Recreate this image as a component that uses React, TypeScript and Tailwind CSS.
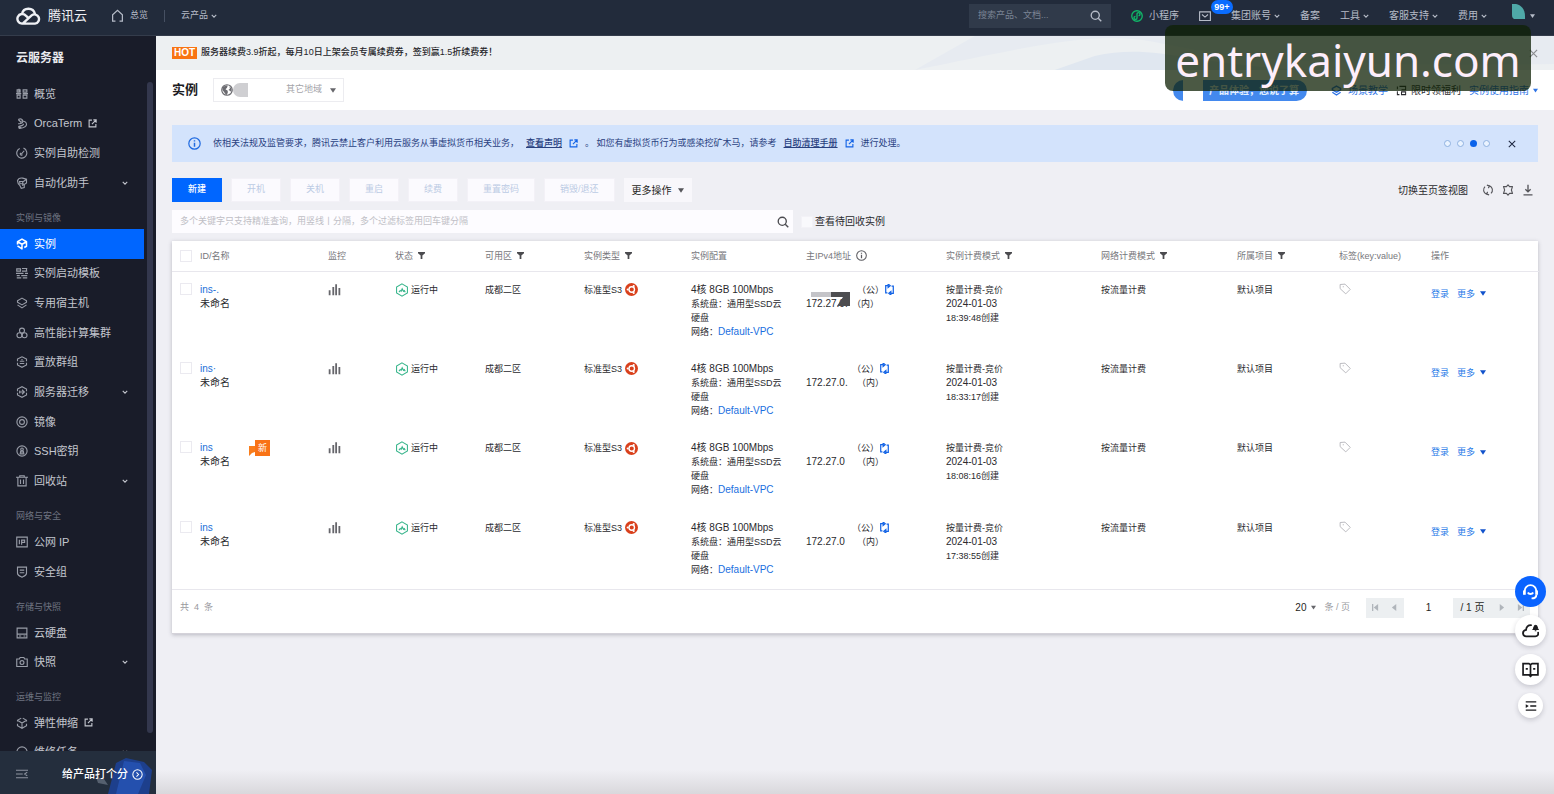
import type { ReactNode } from 'react';

type IconProps = { className?: string; children: ReactNode; box?: string; stroke?: number };

function Svg({ className = 'size-3', children, box = '0 0 16 16', stroke = 1.5 }: IconProps) {
  return (
    <svg
      viewBox={box}
      className={`shrink-0 ${className}`}
      fill="none"
      stroke="currentColor"
      strokeWidth={stroke}
      aria-hidden="true"
    >
      {children}
    </svg>
  );
}

const Chevron = ({ className = 'size-[6px]' }: { className?: string }) => (
  <Svg className={className} box="0 0 8 8">
    <path d="M1 2.5 4 5.5 7 2.5" />
  </Svg>
);

const Caret = ({ className = 'w-[7px] h-[5px]' }: { className?: string }) => (
  <svg viewBox="0 0 8 6" className={`shrink-0 ${className}`} fill="currentColor" aria-hidden="true">
    <path d="M0 0h8L4 6z" />
  </svg>
);

const External = ({ className = 'size-[9px]' }: { className?: string }) => (
  <Svg className={className} stroke={2}>
    <path d="M7 2H2v12h12V9M9.5 1.5h5v5M14 2 7 9" />
  </Svg>
);

const Magnifier = ({ className = 'size-3' }: { className?: string }) => (
  <Svg className={className} stroke={1.8}>
    <circle cx="7" cy="7" r="5.4" />
    <path d="m11 11 4 4" />
  </Svg>
);

const Close = ({ className = 'size-[9px]' }: { className?: string }) => (
  <Svg className={className} box="0 0 10 10" stroke={1.3}>
    <path d="m1 1 8 8M9 1 1 9" />
  </Svg>
);

const Funnel = () => (
  <svg viewBox="0 0 8 8" className="size-[7px] shrink-0" fill="#4b4b4f" aria-hidden="true">
    <path d="M0 0h8v1.4L5 4v4H3V4L0 1.4z" />
  </svg>
);

const Info = ({ className = 'size-3' }: { className?: string }) => (
  <Svg className={className}>
    <circle cx="8" cy="8" r="7" />
    <path d="M8 7v5M8 4v1.6" strokeWidth="1.8" />
  </Svg>
);

const navIcons: Record<string, ReactNode> = {
  overview: (
    <path d="M1.5 2.5h4v3h-4zM9.5 2.5h5v3h-5zM1.5 9.5h4v4h-4zM9.5 9.5h5v4h-5zM0 7.5h7M9 7.5h7M4 1v5" />
  ),
  orca: (
    <path d="M3 2c4-2 6 0 6 2.500S6 8 3 7.500M3 2l4 4M7 4c4 0 7 1.500 7 4.500S10 13 5 14c-2-1-1.500-3 1-3.500 3-.5 4-1.500 4-3M3 11l4 2" />
  ),
  check: (
    <path d="M5 2a6.700 6.700 0 1 0 8 2M10 1.500a6 6 0 0 1 3.500 3M7 9.500 11 5M6.500 8a1.500 1.500 0 1 0 2 2" />
  ),
  helper: (
    <path d="M2 5c1-3 4-4 7-3.500L14 3v5l-3 2v4l-4 1-2-4-2-2zM4 6h6l4-3M5 9h4l2 1M5 6v3M9 6v6" />
  ),
  instance: (
    <path
      d="M2 8.500V5l6-3.500L14 5v6l-3 1.700M2 5l6 3.300L14 5M2 10.500 8 14.500V8.500"
      strokeWidth="2"
      strokeLinejoin="round"
    />
  ),
  template: (
    <path d="M1 2.500h5v3H1zM8 2h7M8 5.500h7M14 2v4M0 8.500h10M12 8.500h4M1 11.500h4M7 11.500h8M1 14.500h6M9 14.500h6" />
  ),
  host: <path d="M8 1.500 14 5v2L8 10.500 2 7V5zM2 10.500 8 14.500l6-4" strokeLinejoin="round" />,
  cluster: (
    <>
      <circle cx="8" cy="4.800" r="3.300" />
      <circle cx="4.600" cy="11" r="3.300" />
      <circle cx="11.400" cy="11" r="3.300" />
    </>
  ),
  placement: <path d="M8 1 14 4v3M14 9v3l-6 3-6-3V9M2 7V4l6-3M5 7h6M5 10h6M7 5h2" />,
  migrate: <path d="M2 7V4l6-3 6 3v3M14 9v3l-6 3-6-3V9M4 8h8M8 5l3 3-3 3M5 6v4" />,
  image: (
    <>
      <circle cx="8" cy="8" r="6.800" />
      <circle cx="8" cy="8" r="3.200" />
    </>
  ),
  key: (
    <>
      <circle cx="8" cy="8" r="6.800" />
      <circle cx="8" cy="5.700" r="1.700" />
      <path d="M6.500 7.500 5.500 12h5l-1-4.500M8 8v4" />
    </>
  ),
  trash: <path d="M0 3h16M5 2.500V1h6v1.500M2.500 3v11.500h11V3M6 6v6M10 6v6" />,
  ip: <path d="M1 1.500h14v13H1zM4.500 5v6M7.500 11.500V5.500h4v3h-4" />,
  shield: <path d="M2 1.500h12v8c0 3-3 4-6 5.500-3-1.500-6-2.500-6-5.500zM5 5.500h6M5 9h6" />,
  disk: <path d="M1.500 1.500h13v13h-13zM1.500 9.500h13M10 12h2.500M4 12h3" />,
  camera: (
    <>
      <path d="M1 4h3.500l1-2h5l1 2H15v10H1z" />
      <circle cx="8" cy="8.800" r="2.600" />
    </>
  ),
  scaling: <path d="M2 6V4.500l5-3M9 1.500l5 3V6M14 9v2.500L8 15l-6-3.500V9M3 5l5 3 5-3M8 8v6" />,
  repair: (
    <>
      <circle cx="8" cy="8" r="6.800" />
      <path d="M5 8h6" />
    </>
  ),
};

type NavItem = { icon: string; label: string; more?: boolean; external?: boolean; active?: boolean };

function NavList({ items, className }: { items: NavItem[]; className: string }) {
  return (
    <ul className={`grid auto-rows-fr ${className}`}>
      {items.map((item) => (
        <li key={item.label} className="flex pr-3">
          <a
            href="#"
            className={`flex flex-1 items-center pl-4 text-[11px] ${
              item.active ? 'bg-[#0066ff] text-white' : 'text-[#c3c6ce]'
            }`}
          >
            <span className={item.active ? 'text-white' : 'text-[#999da8]'}>
              <Svg>{navIcons[item.icon]}</Svg>
            </span>
            <span className="ml-[6px]">{item.label}</span>
            {item.external && <External className="ml-[6px] size-[9px]" />}
            {item.more && <Chevron className="mr-4 ml-auto size-[6px]" />}
          </a>
        </li>
      ))}
    </ul>
  );
}

const NavHeading = ({ children }: { children: ReactNode }) => (
  <h3 className="flex h-[31px] shrink-0 items-center pt-[10px] pl-4 text-[9px] text-[#6f7481]">{children}</h3>
);

function Sidebar() {
  return (
    <aside className="relative flex w-[156px] shrink-0 flex-col bg-[#191c29]">
      <h2 className="flex h-[43px] shrink-0 items-center pl-4 text-[12px] font-bold text-[#e9eaee]">云服务器</h2>
      <nav className="min-h-0 flex-1 overflow-hidden" aria-label="云服务器">
        <NavList
          className="h-[119px]"
          items={[
            { icon: 'overview', label: '概览' },
            { icon: 'orca', label: 'OrcaTerm', external: true },
            { icon: 'check', label: '实例自助检测' },
            { icon: 'helper', label: '自动化助手', more: true },
          ]}
        />
        <NavHeading>实例与镜像</NavHeading>
        <NavList
          className="h-[267px]"
          items={[
            { icon: 'instance', label: '实例', active: true },
            { icon: 'template', label: '实例启动模板' },
            { icon: 'host', label: '专用宿主机' },
            { icon: 'cluster', label: '高性能计算集群' },
            { icon: 'placement', label: '置放群组' },
            { icon: 'migrate', label: '服务器迁移', more: true },
            { icon: 'image', label: '镜像' },
            { icon: 'key', label: 'SSH密钥' },
            { icon: 'trash', label: '回收站', more: true },
          ]}
        />
        <NavHeading>网络与安全</NavHeading>
        <NavList
          className="h-[60px]"
          items={[
            { icon: 'ip', label: '公网 IP' },
            { icon: 'shield', label: '安全组' },
          ]}
        />
        <NavHeading>存储与快照</NavHeading>
        <NavList
          className="h-[59px]"
          items={[
            { icon: 'disk', label: '云硬盘' },
            { icon: 'camera', label: '快照', more: true },
          ]}
        />
        <NavHeading>运维与监控</NavHeading>
        <NavList
          className="h-[59px]"
          items={[
            { icon: 'scaling', label: '弹性伸缩', external: true },
            { icon: 'repair', label: '维修任务', more: true },
          ]}
        />
      </nav>
      <div className="absolute top-[46px] right-[3px] bottom-[61px] w-[6px] rounded-sm bg-[#33374d]" />
      <div className="relative flex h-[43px] shrink-0 items-center bg-[#242e3d] pt-[3px] pl-4">
        <svg viewBox="0 0 60 43" className="absolute right-0 bottom-0 h-[43px] w-[60px]" aria-hidden="true">
          <path d="M12 43 20 12l10-5 18 4 8 8-3 24z" fill="#1d3f8c" />
          <path d="M20 43 28 10l16 2 6 12-8 19z" fill="#2a5cc4" opacity=".6" />
          <path d="m0 26 8 2 4 6-10-2z" fill="#56606f" />
        </svg>
        <button type="button" aria-label="收起菜单" className="text-[#8d93a0]">
          <Svg>
            <path d="M0 3h16M0 8h9M0 13h16M15 5.500 11.500 8l3.500 2.500" />
          </Svg>
        </button>
        <a href="#" className="relative ml-auto flex items-center gap-1 pr-[13px] text-[11px] font-medium text-white">
          给产品打个分
          <Svg className="size-[11px]">
            <circle cx="8" cy="8" r="6.800" />
            <path d="m6.500 5 3 3-3 3" />
          </Svg>
        </a>
      </div>
    </aside>
  );
}

const TopLink = ({ label, menu }: { label: string; menu?: boolean }) => (
  <a href="#" className="flex items-center gap-[3px]">
    {label}
    {menu && <Chevron />}
  </a>
);

function TopBar() {
  return (
    <header className="flex h-9 shrink-0 items-center border-b border-[#343c4b] bg-[#222b3b] pr-[19px] pb-1 pl-4 text-[10px] text-[#b6bcc8]">
      <a href="#" className="flex items-center gap-[7px] text-[13px] text-[#eef0f4]">
        <Svg box="0 0 25 19" className="h-[19px] w-[25px]" stroke={2.4}>
          <path
            d="M12.500 12 9.800 9.600A4.800 4.800 0 1 0 6 17.600H19A4.600 4.600 0 1 0 15.600 9.400L7.200 17.200M6 8A6.600 6.600 0 0 1 18.900 7.800"
            strokeLinecap="round"
          />
        </Svg>
        腾讯云
      </a>
      <a href="#" className="ml-6 flex items-center gap-[6px] text-[9px]">
        <Svg className="size-[13px]">
          <path d="M5.500 15H2V7l6-5.500L14 7v8h-3.500" />
        </Svg>
        总览
      </a>
      <span className="ml-4 h-3 w-px bg-[#465062]" />
      <div className="ml-4 text-[9px]">
        <TopLink label="云产品" menu />
      </div>
      <div className="ml-auto flex items-center gap-5">
        <label className="flex h-6 w-[142px] items-center bg-[#303a4a] px-[9px]">
          <input
            type="search"
            aria-label="搜索"
            placeholder="搜索产品、文档..."
            className="min-w-0 flex-1 bg-transparent text-[9px] outline-none placeholder:text-[#7b8494]"
          />
          <Magnifier />
        </label>
        <a href="#" className="flex items-center gap-[6px]">
          <Svg className="size-3 text-[#10b668]" stroke={1.800}>
            <circle cx="8" cy="8" r="7" />
            <path d="M10 7.500a2 2 0 1 0-2-2v5a2 2 0 1 1-2-2" />
          </Svg>
          小程序
        </a>
        <a href="#" className="relative" aria-label="消息 99+">
          <Svg>
            <path d="M.8 2.500h14.400v11.500H.8zM4 6l4 3.500L12 6" />
          </Svg>
          <span className="absolute -top-[10px] left-3 h-[14px] w-[22px] rounded-full bg-[#0a6cff] text-center text-[9px] leading-[14px] font-bold text-white">
            99+
          </span>
        </a>
        <TopLink label="集团账号" menu />
        <TopLink label="备案" />
        <TopLink label="工具" menu />
        <TopLink label="客服支持" menu />
        <TopLink label="费用" menu />
        <button type="button" aria-label="账户" className="ml-1 flex items-center gap-1">
          <svg viewBox="0 0 13 15" className="mb-2 h-[15px] w-[15px]" aria-hidden="true">
            <path d="M0 0h4c5 1 9 5 9 12v3H2c-2-1-2-3-2-5z" fill="#4fa9a8" />
          </svg>
          <Caret className="h-[4px] w-[5px]" />
        </button>
      </div>
    </header>
  );
}

function PromoBanner() {
  return (
    <section className="relative flex h-[34px] shrink-0 items-center bg-[#edf0f2] px-4">
      <svg
        viewBox="0 0 700 34"
        preserveAspectRatio="none"
        className="absolute inset-y-0 right-0 h-full w-1/2"
        aria-hidden="true"
      >
        <path d="M60 34C180 10 240-6 300 6s120 26 400 22V0H120z" fill="#e7ebf1" />
        <path d="M240 20c60-14 100 10 220 14H200z" fill="#e0e7f0" />
      </svg>
      <span className="bg-[#f97413] px-[2px] text-[10px] leading-[12px] font-bold text-white">HOT</span>
      <a href="#" className="ml-1 text-[9px] font-medium text-[#26262a]">
        服务器续费3.9折起，每月10日上架会员专属续费券，签到赢1.5折续费券！
      </a>
      <button type="button" aria-label="关闭活动" className="relative ml-auto text-[#8a8c90]">
        <Close />
      </button>
    </section>
  );
}

function TitleBar() {
  return (
    <section className="flex h-10 shrink-0 items-center bg-white px-4 text-[10px]">
      <h1 className="text-[13px] font-bold text-[#1c1c1f]">实例</h1>
      <button
        type="button"
        className="ml-[15px] flex h-6 w-[131px] items-center border border-[#ececf0] px-[7px] text-[#a4a4a9]"
      >
        <svg viewBox="0 0 16 16" className="size-3" aria-hidden="true">
          <circle cx="8" cy="8" r="7" fill="#fff" stroke="#6b6b70" strokeWidth="1.600" />
          <path d="M2 4.500 6 2h3l-1 3-2 2 3 2v3l-2 3-2-3-3-4zM11 3l3 3v5l-2-2-2-1 2-2z" fill="#6b6b70" />
        </svg>
        <span className="h-[14px] w-[15px] rounded-l-full bg-[#cfcfd2]" />
        <span className="ml-auto text-[9px]">其它地域</span>
        <Caret className="ml-2 h-[5px] w-[6px] text-[#66666b]" />
      </button>
      <a
        href="#"
        className="relative ml-auto flex h-[21px] w-[134px] items-center justify-end overflow-hidden rounded-full bg-[#4389ee] pr-2 font-bold text-[#e3efff]"
      >
        <span className="absolute inset-y-0 left-[10px] w-5 bg-white" />
        产品体验，您说了算
      </a>
      <a href="#" className="ml-6 flex items-center gap-[6px] text-[#2f74e6]">
        <Svg className="size-[11px]" stroke={2}>
          <path d="M8 1.500 14 5v2L8 10.500 2 7V5zM2 10.500 8 14.500l6-4" />
        </Svg>
        场景教学
      </a>
      <a href="#" className="ml-2 flex items-center gap-1 text-[#2b2b2f]">
        <Svg className="size-[11px]">
          <path d="M2 2v4M5 2h9v5H8M2 9v5h3M8 10h6v4H8z" />
        </Svg>
        限时领福利
      </a>
      <a href="#" className="ml-2 flex items-center gap-1 text-[#2f74e6]">
        实例使用指南
        <Caret className="h-[5px] w-[5px]" />
      </a>
    </section>
  );
}

function Notice() {
  return (
    <section className="flex h-[37px] items-center bg-[#d3e3fc] px-4 text-[9px] text-[#29417f]">
      <Info className="size-[13px] text-[#1f6ae0]" />
      <p className="ml-3 flex items-center gap-[7px] whitespace-nowrap">
        <span>依相关法规及监管要求，腾讯云禁止客户利用云服务从事虚拟货币相关业务，</span>
        <a href="#" className="font-medium underline">
          查看声明
        </a>
        <External className="size-[9px] text-[#1263e6]" />
        <span>。 如您有虚拟货币行为或感染挖矿木马，请参考</span>
        <a href="#" className="font-medium underline">
          自助清理手册
        </a>
        <External className="size-[9px] text-[#1263e6]" />
        <span>进行处理。</span>
      </p>
      <div className="ml-auto flex items-center gap-[6px]">
        {[0, 1, 2, 3].map((dot) => (
          <button
            key={dot}
            type="button"
            aria-label={`公告 ${dot + 1}`}
            className={
              dot === 2
                ? 'size-[7px] rounded-full bg-[#0a62ea]'
                : 'size-[7px] rounded-full border border-[#8fb2e0] bg-[#eaf3ff]'
            }
          />
        ))}
      </div>
      <button type="button" aria-label="关闭公告" className="mr-[6px] ml-[18px] text-[#1d2740]">
        <Close className="size-2" />
      </button>
    </section>
  );
}

function Toolbar() {
  const disabled = ['开机', '关机', '重启', '续费', '重置密码', '销毁/退还'];
  return (
    <div className="mt-4 flex h-6 items-center gap-[9px] text-[9px]">
      <button type="button" className="h-6 w-[50px] bg-[#0066ff] font-medium text-white">
        新建
      </button>
      {disabled.map((label) => (
        <button
          key={label}
          type="button"
          disabled
          className="h-6 border border-[#f3f1f7] bg-[#fbfafe] px-[15px] text-[#bccbe4]"
        >
          {label}
        </button>
      ))}
      <button type="button" className="flex h-6 items-center gap-[6px] bg-[#f8f7fb] px-2 text-[10px] text-[#1f1f23]">
        更多操作
        <Caret className="h-[5px] w-[6px] text-[#55555a]" />
      </button>
      <div className="mr-1 ml-auto flex items-center gap-2 text-[#55555a]">
        <a href="#" className="mr-[6px] text-[10px] text-[#2b2b2f]">
          切换至页签视图
        </a>
        <button type="button" aria-label="刷新">
          <Svg>
            <path d="M6 13.500A6 6 0 0 1 4 3.500M10 2.500A6 6 0 0 1 12 12.500M6.500 1.500 10 2.500 8.500 5.500M9.500 14.500 6 13.500 7.500 10.500" />
          </Svg>
        </button>
        <button type="button" aria-label="设置">
          <Svg>
            <path d="m8 1 2 2.500h4L12.500 8l1.500 4.500h-4L8 15l-2-2.500H2L3.500 8 2 3.500h4z" strokeLinejoin="round" />
          </Svg>
        </button>
        <button type="button" aria-label="下载">
          <Svg>
            <path d="M8 1v9M4.500 7 8 10.500 11.500 7M2 14.500h12" strokeWidth="1.800" />
          </Svg>
        </button>
      </div>
    </div>
  );
}

function FilterRow() {
  return (
    <div className="mt-2 flex h-[23px] items-center text-[9px]">
      <label className="flex h-[23px] w-5/11 items-center bg-[#fdfcff] pr-1 pl-2">
        <input
          type="text"
          aria-label="筛选实例"
          placeholder="多个关键字只支持精准查询，用竖线丨分隔，多个过滤标签用回车键分隔"
          className="min-w-0 flex-1 bg-transparent outline-none placeholder:text-[#c0bfc6]"
        />
        <Magnifier className="size-3 text-[#4b4b50]" />
      </label>
      <label className="ml-2 flex items-center gap-[2px] text-[#2b2b2f]">
        <input type="checkbox" className="size-3 appearance-none border border-[#f3f2f7] bg-[#f9f9fc]" />
        <span className="text-[10px]">查看待回收实例</span>
      </label>
    </div>
  );
}

type Instance = { id: string; tail: string; created: string; ip: string; masked?: boolean; isNew?: boolean };

const instances: Instance[] = [
  { id: 'ins-', tail: '.', created: '18:39:48创建', ip: '172.27.0.', masked: true },
  { id: 'ins', tail: '·', created: '18:33:17创建', ip: '172.27.0.' },
  { id: 'ins', tail: '', created: '18:08:16创建', ip: '172.27.0', isNew: true },
  { id: 'ins', tail: '', created: '17:38:55创建', ip: '172.27.0' },
];

const columns: { label: string; width: string; filter?: boolean; info?: boolean }[] = [
  { label: 'ID/名称', width: 'w-[128px]' },
  { label: '监控', width: 'w-[67px]' },
  { label: '状态', width: 'w-[90px]', filter: true },
  { label: '可用区', width: 'w-[99px]', filter: true },
  { label: '实例类型', width: 'w-[107px]', filter: true },
  { label: '实例配置', width: 'w-[115px]' },
  { label: '主IPv4地址', width: 'w-[140px]', info: true },
  { label: '实例计费模式', width: 'w-[155px]', filter: true },
  { label: '网络计费模式', width: 'w-[136px]', filter: true },
  { label: '所属项目', width: 'w-[102px]', filter: true },
  { label: '标签(key:value)', width: 'w-[92px]' },
  { label: '操作', width: 'w-[108px]' },
];

const RowCheckbox = ({ label }: { label: string }) => (
  <input
    type="checkbox"
    aria-label={label}
    className="block size-3 appearance-none border border-[#ebeaf0] bg-white"
  />
);

function InstanceRow({ item, index }: { item: Instance; index: number }) {
  return (
    <tr className="align-top">
      <td className="py-[11px] pl-2">
        <RowCheckbox label={`选择实例 ${index + 1}`} />
      </td>
      <td className="relative py-[11px]">
        <a href="#" className="text-[10px] text-[#1a6fd8]">
          {item.id}
          {item.tail}
        </a>
        <div className="text-[10px]">未命名</div>
        {item.isNew && (
          <span className="absolute top-[10px] left-[49px] flex items-end">
            <svg viewBox="0 0 6 10" className="h-[10px] w-[6px]" fill="#f97d1c" aria-hidden="true">
              <path d="M0 0h6v6L3 7l-3 3z" />
            </svg>
            <span className="bg-[#f97316] px-[3px] leading-[16px] text-white">新</span>
          </span>
        )}
      </td>
      <td className="py-[11px]">
        <button type="button" aria-label="监控" className="block text-[#66666b]">
          <Svg className="size-[13px]">
            <path d="M2 9v6M6.500 5v10M10 1.500V15M14 6v9" strokeWidth="2.200" />
          </Svg>
        </button>
      </td>
      <td className="py-[11px]">
        <span className="flex items-center gap-[2px]">
          <Svg className="size-[14px] text-[#35b48a]" stroke={1.200}>
            <path d="M8 1 14.200 4.500v7L8 15 1.800 11.500v-7zM4.500 10.500 6 8.500l1 1 1.200-3 1.500 3 1-.8 1 1.800" />
          </Svg>
          运行中
        </span>
      </td>
      <td className="py-[11px]">成都二区</td>
      <td className="py-[11px]">
        <span className="flex items-center gap-[3px]">
          标准型S3
          <svg viewBox="0 0 16 16" className="size-[13px]" aria-hidden="true">
            <circle cx="8" cy="8" r="8" fill="#d9401c" />
            <circle cx="8.300" cy="8" r="3.400" fill="none" stroke="#fff" strokeWidth="1.700" />
            <circle cx="3.300" cy="8" r="1.300" fill="#fff" />
            <circle cx="10.700" cy="3.700" r="1.300" fill="#fff" />
            <circle cx="10.700" cy="12.300" r="1.300" fill="#fff" />
          </svg>
        </span>
      </td>
      <td className="py-[11px] whitespace-nowrap">
        <div className="text-[10px]">4核 8GB 100Mbps</div>
        <div>系统盘：通用型SSD云</div>
        <div>硬盘</div>
        <div>
          网络：
          <a href="#" className="text-[10px] text-[#1a6fe0]">
            Default-VPC
          </a>
        </div>
      </td>
      <td className="relative py-[11px] whitespace-nowrap">
        <div className={`flex items-center ${item.masked ? 'pl-[51px]' : 'pl-[46px]'}`}>
          （公）
          <button type="button" aria-label="转换为弹性公网IP" className="text-[#1263e6]">
            <Svg className="size-[11px]" stroke={2}>
              <path d="M7 2.500H2.500V13H5M9 13.500h4.500V3H11M6 0v5l3-2.500zM10 11v5l-3-2.500z" strokeWidth="1.800" />
            </Svg>
          </button>
        </div>
        <div className="flex">
          <span className={`text-[10px] ${item.masked ? 'w-[46px]' : 'w-[51px]'}`}>{item.ip}</span>
          （内）
        </div>
        {item.masked && (
          <svg viewBox="0 0 40 15" className="absolute top-[20px] left-[5px] h-[15px] w-[40px]" aria-hidden="true">
            <path d="M0 0h20v5H0z" fill="#c4c4c8" />
            <path d="M20 0h19v14H26l6-9H20z" fill="#4d4d50" />
          </svg>
        )}
      </td>
      <td className="py-[11px]">
        <div>按量计费-竞价</div>
        <div className="text-[10px]">2024-01-03</div>
        <div>{item.created}</div>
      </td>
      <td className="py-[11px]">按流量计费</td>
      <td className="py-[11px]">默认项目</td>
      <td className="py-[11px]">
        <button type="button" aria-label="编辑标签" className="block text-[#b9b9be]">
          <Svg stroke={1.300}>
            <path d="M1.500 2 8 1.500l7 7-6 6-7.500-7zM5 5h1.500" strokeLinejoin="round" />
          </Svg>
        </button>
      </td>
      <td className="py-[15px]">
        <span className="flex items-center text-[#1f7ae8]">
          <a href="#">登录</a>
          <button type="button" className="ml-2 flex items-center gap-[5px]">
            更多
            <Caret className="h-[5px] w-[6px] text-[#1152cc]" />
          </button>
        </span>
      </td>
    </tr>
  );
}

function PageStep({ label, path }: { label: string; path: string }) {
  return (
    <button type="button" aria-label={label} className="flex h-5 w-[19px] items-center justify-center text-[#b0b5bb]">
      <svg viewBox="0 0 8 8" className="size-[7px]" fill="currentColor" aria-hidden="true">
        <path d={path} />
      </svg>
    </button>
  );
}

function InstanceTable() {
  return (
    <section className="mt-2 border-b border-[#d4d2d9] bg-white shadow-[0_1px_4px_rgba(60,60,80,0.3)]">
      <table className="h-[348px] w-full table-fixed text-left text-[9px] leading-[14px] text-[#2a2a2e]">
        <thead>
          <tr className="h-[30px] border-b border-[#e8e7ed] text-[#77777c]">
            <th className="w-[28px] pl-2">
              <RowCheckbox label="全选" />
            </th>
            {columns.map((column) => (
              <th key={column.label} className={`font-normal whitespace-nowrap ${column.width}`}>
                <span className="flex items-center gap-[5px]">
                  {column.label}
                  {column.filter && <Funnel />}
                  {column.info && <Info className="size-[11px] text-[#5b5b60]" />}
                </span>
              </th>
            ))}
          </tr>
        </thead>
        <tbody>
          {instances.map((item, index) => (
            <InstanceRow key={item.created} item={item} index={index} />
          ))}
        </tbody>
      </table>
      <footer className="flex h-11 items-center border-t border-[#e8e7ed] pb-2 pl-2 text-[9px]">
        <span className="text-[#98989d]">共&nbsp; 4 &nbsp;条</span>
        <button type="button" className="ml-auto flex items-center gap-[5px] text-[10px] text-[#1f1f23]">
          20
          <Caret className="h-[5px] w-[5px] text-[#66666b]" />
        </button>
        <span className="ml-2 text-[#98989d]">条 / 页</span>
        <div className="mr-2 ml-4 flex items-center bg-[#eceff1]">
          <PageStep label="首页" path="M0 0h1.500v8H0zM7 0v8L2 4z" />
          <PageStep label="上一页" path="M6 0v8L1 4z" />
          <input
            type="text"
            aria-label="页码"
            defaultValue="1"
            className="h-5 w-[49px] bg-white text-center text-[10px] text-[#1f1f23] outline-none"
          />
          <span className="w-[39px] text-center text-[10px] text-[#1f1f23]">/ 1 页</span>
          <PageStep label="下一页" path="M2 0v8l5-4z" />
          <PageStep label="末页" path="M6.500 0H8v8H6.500zM1 0v8l5-4z" />
        </div>
      </footer>
    </section>
  );
}

function FloatingTools() {
  const base = 'flex items-center justify-center rounded-full';
  return (
    <div className="fixed right-2 bottom-[76px] flex flex-col items-center gap-2 text-[#1b1b1e]">
      <button type="button" aria-label="在线客服" className={`${base} size-[31px] bg-[#0a63ff] text-white`}>
        <Svg className="size-[17px]" stroke={1.800}>
          <path d="M2.500 7.500a5.500 5.500 0 0 1 11 0M13.500 11c0 2.500-1.500 3.500-4.500 3.500M5.500 9c1 1.800 4 1.800 5 0" />
          <path d="M1.500 7.500h1.500v3H1.500zM13 7.500h1.500v3H13z" fill="currentColor" strokeWidth="1" />
        </Svg>
      </button>
      <button
        type="button"
        aria-label="云消息"
        className={`${base} size-[31px] bg-white shadow-[0_2px_5px_rgba(40,40,60,0.2)]`}
      >
        <Svg className="size-[17px]" stroke={1.700}>
          <path
            d="M8.500 3C5.500 3 4 5 3.800 7.500 1.500 8 .8 9.500 1 11c.2 1.700 1.500 2.500 3 2.500h8.500c2.200 0 3-1.500 2.700-3.500"
            strokeLinecap="round"
          />
          <path d="M10.500 7c.8-1 .3-4 2.300-4s1.500 3 2.300 4zM12 8.300h1.500" fill="currentColor" strokeWidth="1" />
        </Svg>
      </button>
      <button
        type="button"
        aria-label="文档"
        className={`${base} size-[31px] bg-white shadow-[0_2px_5px_rgba(40,40,60,0.2)]`}
      >
        <Svg className="size-[17px]" stroke={1.600}>
          <path d="M1 2.500h5.500L8 3.500l1.500-1H15v10.500H9.500L8 14.500 6.500 13H1zM8 3.500v11M3.500 7.500h2M10.500 7.500h2" />
        </Svg>
      </button>
      <button
        type="button"
        aria-label="收起"
        className={`${base} size-[25px] bg-white shadow-[0_2px_5px_rgba(40,40,60,0.2)]`}
      >
        <Svg stroke={1.800}>
          <path d="M1 2.500h14M7 8h8M1 13.500h14" />
          <path d="M1 5.500v5L5 8z" fill="currentColor" stroke="none" />
        </Svg>
      </button>
    </div>
  );
}

export default function App() {
  return (
    <div className="flex h-screen flex-col overflow-hidden font-['Liberation_Sans','Noto_Sans_CJK_SC',sans-serif]">
      <TopBar />
      <div className="flex min-h-0 flex-1">
        <Sidebar />
        <main className="flex min-w-0 flex-1 flex-col bg-[#efeff4]">
          <PromoBanner />
          <TitleBar />
          <div className="px-4 pt-[15px]">
            <Notice />
            <Toolbar />
            <FilterRow />
            <InstanceTable />
          </div>
          <div className="mt-auto h-6 bg-linear-to-b from-[#efeff4] to-[#d9d8dc]" />
        </main>
      </div>
      <FloatingTools />
      <div className="absolute top-[25px] right-[23px] flex h-[66px] w-[366px] items-center justify-center rounded-lg bg-[rgba(15,33,5,0.75)] pt-1 font-['Noto_Sans',sans-serif] text-[44px] text-[#fdeefb]">
        entrykaiyun.com
      </div>
    </div>
  );
}
